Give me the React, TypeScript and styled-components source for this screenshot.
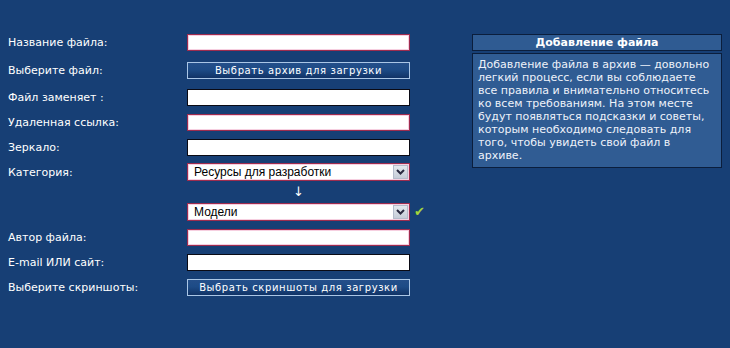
import React from "react";
import styled, { createGlobalStyle } from "styled-components";

const GlobalStyle = createGlobalStyle`
	html, body {
		margin: 0;
		padding: 0;
		background: #173f75;
	}
	body {
		font-family: "DejaVu Sans", Verdana, sans-serif;
		font-size: 11px;
		color: #ffffff;
	}
`;

const Page = styled.div`
	width: 730px;
	height: 348px;
	background: #173f75;
	display: flex;
	align-items: flex-start;
	padding: 34px 0 0 8px;
	box-sizing: border-box;
	overflow: hidden;
`;

const Form = styled.div`
	display: flex;
	flex-direction: column;
	width: 440px;
`;

const Row = styled.div<{ $gap?: number }>`
	display: flex;
	align-items: center;
	margin-top: ${(p) => p.$gap ?? 8}px;
	&:first-child {
		margin-top: 0;
	}
`;

const Label = styled.div`
	width: 179px;
	flex-shrink: 0;
	font-size: 11px;
	line-height: 13px;
	color: #ffffff;
`;

const Input = styled.input<{ $required?: boolean }>`
	width: 223px;
	height: 17px;
	box-sizing: border-box;
	margin: 0;
	padding: 0 4px;
	background: #ffffff;
	border: 1px solid ${(p) => (p.$required ? "#9e2c4e" : "#0a0a14")};
	box-shadow: ${(p) => (p.$required ? "inset 0 0 0 1px #f6cfe0" : "none")};
	font-family: "Liberation Sans", Arial, sans-serif;
	font-size: 12px;
	outline: none;
`;

const Button = styled.button`
	width: 223px;
	height: 17px;
	box-sizing: border-box;
	margin: 0;
	padding: 0;
	border: 1px solid #aac6e6;
	background: linear-gradient(#244f8a 0%, #1d4b86 45%, #113366 100%);
	color: #ffffff;
	font-family: "DejaVu Sans", Verdana, sans-serif;
	font-size: 10px;
	letter-spacing: 0.6px;
	line-height: 15px;
	cursor: pointer;
`;

const Select = styled.div`
	width: 223px;
	height: 18px;
	box-sizing: border-box;
	display: flex;
	align-items: center;
	background: #ffffff;
	border: 1px solid #9e2c4e;
	box-shadow: inset 0 0 0 1px #f6cfe0;
	color: #000000;
	font-family: "Liberation Sans", Arial, sans-serif;
	font-size: 12px;
`;

const SelectText = styled.span`
	flex: 1;
	padding-left: 6px;
	white-space: nowrap;
	overflow: hidden;
`;

const SelectButton = styled.span`
	width: 15px;
	height: 14px;
	margin-right: 1px;
	display: flex;
	align-items: center;
	justify-content: center;
	background: linear-gradient(#e4e8ee, #c6cdd8);
	border: 1px solid #b4bccb;
	box-sizing: border-box;
`;

const Spacer = styled.div`
	width: 179px;
	flex-shrink: 0;
`;

const ArrowCell = styled.div`
	width: 223px;
	height: 14px;
	display: flex;
	justify-content: center;
	color: #ffffff;
	font-size: 13px;
	line-height: 14px;
`;

const Check = styled.span`
	margin-left: 4px;
	color: #a4d43c;
	font-size: 13px;
	line-height: 14px;
`;

const Panel = styled.div`
	margin-left: 24px;
	width: 250px;
	display: flex;
	flex-direction: column;
	gap: 2px;
`;

const PanelHeader = styled.div`
	height: 17px;
	box-sizing: border-box;
	background: #2f5b92;
	border: 1px solid #0b1e3c;
	text-align: center;
	font-weight: bold;
	font-size: 11px;
	line-height: 15px;
	color: #ffffff;
`;

const PanelBody = styled.div`
	background: #305c93;
	border: 1px solid #0b1e3c;
	padding: 4px 5px 5px 5px;
	font-size: 11px;
	line-height: 13px;
	color: #eef2fa;
`;

const Chevron = () => (
	<svg width="9" height="6" viewBox="0 0 9 6">
		<path d="M1 1 L4.5 4.5 L8 1" fill="none" stroke="#2a2a40" strokeWidth="2" />
	</svg>
);

const App: React.FC = () => {
	return (
		<>
			<GlobalStyle />
			<Page>
				<Form>
					<Row>
						<Label>Название файла:</Label>
						<Input $required />
					</Row>
					<Row $gap={11}>
						<Label>Выберите файл:</Label>
						<Button>Выбрать архив для загрузки</Button>
					</Row>
					<Row $gap={10}>
						<Label>Файл заменяет :</Label>
						<Input />
					</Row>
					<Row>
						<Label>Удаленная ссылка:</Label>
						<Input $required />
					</Row>
					<Row>
						<Label>Зеркало:</Label>
						<Input />
					</Row>
					<Row $gap={7}>
						<Label>Категория:</Label>
						<Select>
							<SelectText>Ресурсы для разработки</SelectText>
							<SelectButton>
								<Chevron />
							</SelectButton>
						</Select>
					</Row>
					<Row $gap={4}>
						<Spacer />
						<ArrowCell>↓</ArrowCell>
					</Row>
					<Row $gap={4}>
						<Spacer />
						<Select>
							<SelectText>Модели</SelectText>
							<SelectButton>
								<Chevron />
							</SelectButton>
						</Select>
						<Check>✔</Check>
					</Row>
					<Row $gap={8}>
						<Label>Автор файла:</Label>
						<Input $required />
					</Row>
					<Row>
						<Label>E-mail ИЛИ сайт:</Label>
						<Input />
					</Row>
					<Row>
						<Label>Выберите скриншоты:</Label>
						<Button>Выбрать скриншоты для загрузки</Button>
					</Row>
				</Form>
				<Panel>
					<PanelHeader>Добавление файла</PanelHeader>
					<PanelBody>
						Добавление файла в архив — довольно легкий процесс, если вы соблюдаете все
						правила и внимательно относитесь ко всем требованиям. На этом месте будут
						появляться подсказки и советы, которым необходимо следовать для того, чтобы
						увидеть свой файл в архиве.
					</PanelBody>
				</Panel>
			</Page>
		</>
	);
};

export default App;
